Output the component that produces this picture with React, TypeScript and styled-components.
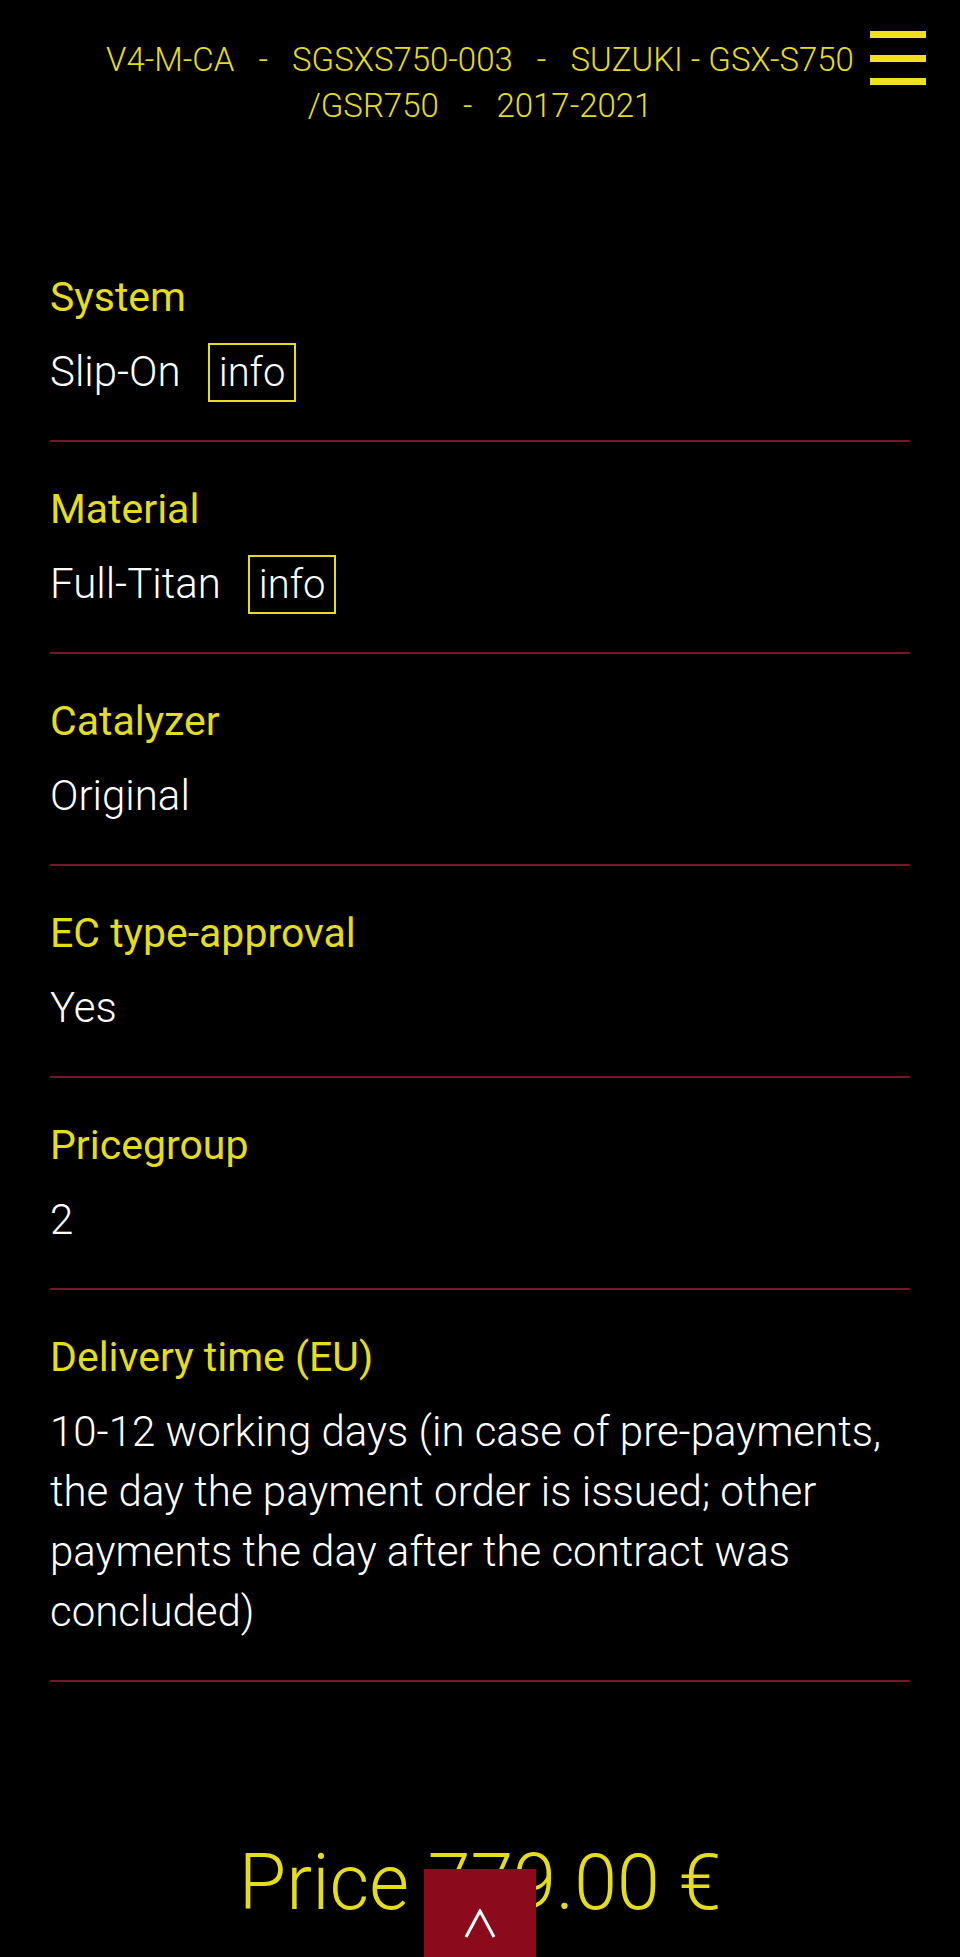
import React from 'react'
import styled, { createGlobalStyle } from 'styled-components'

const GlobalStyle = createGlobalStyle`
  html, body {
    margin: 0;
    padding: 0;
    background: #000;
  }
  body {
    font-family: Roboto, 'Liberation Sans', Arial, sans-serif;
    color: #fff;
  }
`

const YELLOW = '#e6dc1e'
const DIVIDER = '#7a1428'
const SEP = '\u00a0\u00a0\u00a0-\u00a0\u00a0\u00a0'

const Page = styled.div`
  background: #000;
  min-height: 1957px;
  box-sizing: border-box;
`

const Header = styled.header`
  position: relative;
  padding-top: 37px;
`

const Title = styled.h1`
  margin: 0 auto;
  max-width: 760px;
  text-align: center;
  font-size: 33px;
  line-height: 46px;
  font-weight: 300;
  color: ${YELLOW};
`

const Burger = styled.button`
  position: absolute;
  top: 31px;
  right: 34px;
  width: 56px;
  height: 54px;
  padding: 0;
  border: 0;
  background: transparent;
  display: flex;
  flex-direction: column;
  justify-content: space-between;
  cursor: pointer;
`

const BurgerBar = styled.span`
  display: block;
  height: 7px;
  width: 100%;
  background: #f0e020;
`

const SpecList = styled.div`
  margin-top: 101px;
  padding: 0 50px;
`

const Spec = styled.section`
  padding: 42px 0 38px;
  border-bottom: 2px solid ${DIVIDER};
`

const Label = styled.h2`
  margin: 0;
  font-size: 41px;
  line-height: 50px;
  font-weight: 400;
  color: ${YELLOW};
`

const Value = styled.div`
  margin-top: 20px;
  display: flex;
  align-items: center;
  font-size: 42px;
  line-height: 60px;
  font-weight: 300;
  color: #fff;
`

const Text = styled.p`
  margin: 0;
  flex: 1;
`

const InfoButton = styled.button`
  margin-left: 27px;
  height: 59px;
  padding: 0 9px;
  border: 2px solid ${YELLOW};
  background: transparent;
  color: #fff;
  font-family: inherit;
  font-size: 40px;
  line-height: 53px;
  font-weight: 300;
  cursor: pointer;
`

const Price = styled.div`
  margin-top: 156px;
  text-align: center;
  font-size: 77px;
  line-height: 90px;
  font-weight: 300;
  color: ${YELLOW};
`

const BackToTop = styled.button`
  position: fixed;
  left: 50%;
  bottom: 0;
  transform: translateX(-50%);
  width: 112px;
  height: 88px;
  border: 0;
  padding: 40px 0 0;
  background: #8b0a1c;
  display: flex;
  justify-content: center;
  align-items: flex-start;
  cursor: pointer;
`

const SPECS: { label: string; value: string; info?: boolean }[] = [
  { label: 'System', value: 'Slip-On', info: true },
  { label: 'Material', value: 'Full-Titan', info: true },
  { label: 'Catalyzer', value: 'Original' },
  { label: 'EC type-approval', value: 'Yes' },
  { label: 'Pricegroup', value: '2' },
  {
    label: 'Delivery time (EU)',
    value:
      '10-12 working days (in case of pre-payments, the day the payment order is issued; other payments the day after the contract was concluded)',
  },
]

export default function App() {
  return (
    <Page>
      <GlobalStyle />
      <Header>
        <Title>
          {`V4-M-CA${SEP}SGSXS750-003${SEP}SUZUKI - GSX-S750 /GSR750${SEP}2017-2021`}
        </Title>
        <Burger aria-label="Menu">
          <BurgerBar />
          <BurgerBar />
          <BurgerBar />
        </Burger>
      </Header>

      <SpecList>
        {SPECS.map((s) => (
          <Spec key={s.label}>
            <Label>{s.label}</Label>
            <Value>
              {s.info ? (
                <>
                  <span>{s.value}</span>
                  <InfoButton>info</InfoButton>
                </>
              ) : (
                <Text>{s.value}</Text>
              )}
            </Value>
          </Spec>
        ))}
      </SpecList>

      <Price>Price 779.00 €</Price>

      <BackToTop aria-label="Back to top">
        <svg width="32" height="29" viewBox="0 0 32 29">
          <polyline points="2,28 16,2 30,28" fill="none" stroke="#fff" strokeWidth="3" />
        </svg>
      </BackToTop>
    </Page>
  )
}
